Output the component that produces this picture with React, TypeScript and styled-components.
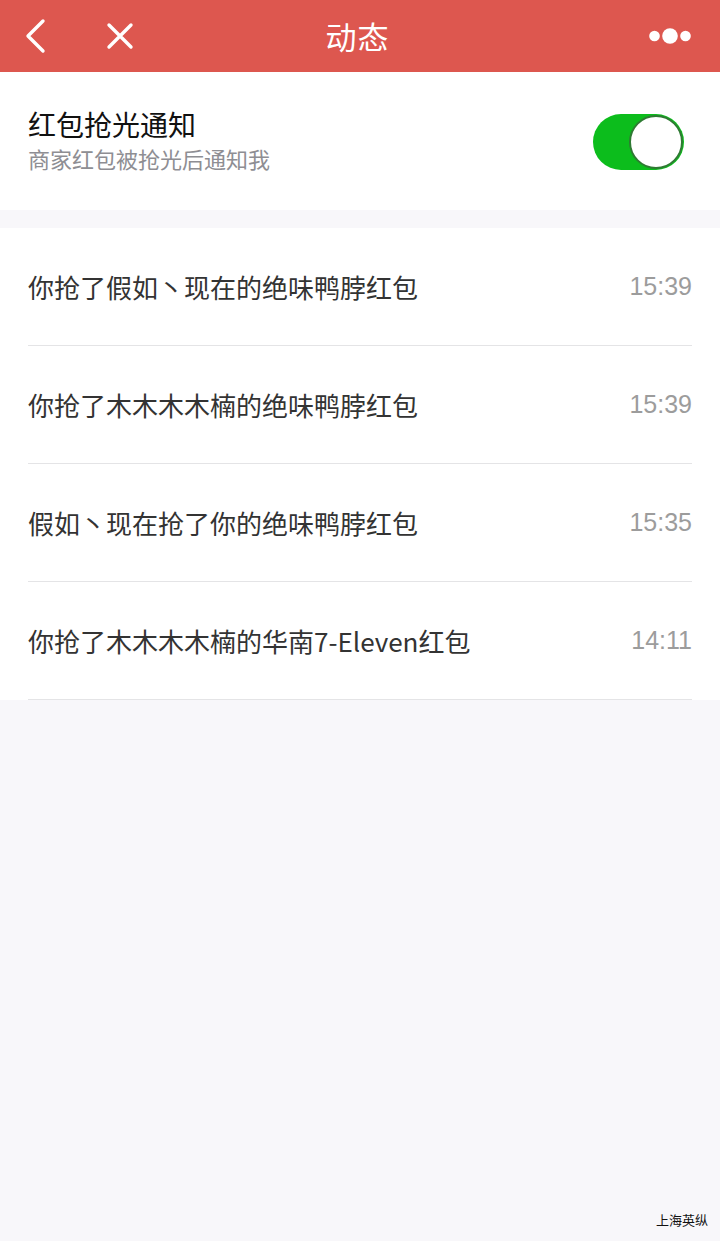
import styled, { createGlobalStyle } from "styled-components";

const GlobalStyle = createGlobalStyle`
  html, body {
    margin: 0;
    padding: 0;
    background: #f8f7fa;
  }
  body {
    font-family: "Noto Sans CJK SC", "Noto Sans", sans-serif;
  }
`;

type Record = { text: string; time: string };

const records: Record[] = [
  { text: "你抢了假如丶现在的绝味鸭脖红包", time: "15:39" },
  { text: "你抢了木木木木楠的绝味鸭脖红包", time: "15:39" },
  { text: "假如丶现在抢了你的绝味鸭脖红包", time: "15:35" },
  { text: "你抢了木木木木楠的华南7-Eleven红包", time: "14:11" },
];

const Page = styled.div`
  width: 720px;
  min-height: 1241px;
  background: #f8f7fa;
  display: flex;
  flex-direction: column;
`;

const NavBar = styled.header`
  height: 72px;
  background: #dd574f;
  display: grid;
  grid-template-columns: 1fr auto 1fr;
  align-items: center;
  padding: 0 29px 0 24px;
  box-sizing: border-box;
`;

const NavLeft = styled.div`
  display: flex;
  align-items: center;
  gap: 60px;
`;

const NavTitle = styled.h1`
  margin: 0 0 2px;
  color: #fff;
  font-size: 31px;
  font-weight: 400;
  letter-spacing: 1px;
`;

const NavRight = styled.div`
  display: flex;
  justify-content: flex-end;
`;

const IconButton = styled.span`
  display: inline-flex;
  align-items: center;
  justify-content: center;
`;

const SwitchSection = styled.section`
  background: #fff;
  height: 138px;
  padding: 0 36px 0 28px;
  display: flex;
  align-items: center;
  justify-content: space-between;
  margin-bottom: 18px;
`;

const SwitchText = styled.div`
  display: flex;
  flex-direction: column;
  gap: 0;
  margin-top: -3px;
`;

const SwitchTitle = styled.div`
  font-size: 28px;
  color: #111;
  line-height: 36px;
`;

const SwitchHint = styled.div`
  font-size: 22px;
  color: #8e8e93;
  line-height: 32px;
`;

const Toggle = styled.div<{ $on: boolean }>`
  width: 91px;
  height: 56px;
  border-radius: 28px;
  background: ${(p) => (p.$on ? "#0cbd1c" : "#e5e5e5")};
  display: flex;
  justify-content: ${(p) => (p.$on ? "flex-end" : "flex-start")};
  margin-top: 2px;
`;

const Knob = styled.div`
  width: 54px;
  height: 54px;
  margin: 1px;
  box-sizing: border-box;
  border-radius: 50%;
  background: #fff;
  border: 2px solid #2f7a33;
`;

const List = styled.ul`
  list-style: none;
  margin: 0;
  padding: 0;
  background: #fff;
`;

const Row = styled.li`
  margin-left: 28px;
  margin-right: 28px;
  height: 118px;
  box-sizing: border-box;
  border-bottom: 1px solid #e4e4e6;
  display: flex;
  align-items: center;
  justify-content: space-between;
`;

const RowText = styled.span`
  font-size: 26px;
  color: #333;
`;

const RowTime = styled.span`
  font-family: "Liberation Sans", "Noto Sans", sans-serif;
  font-size: 25px;
  color: #9c9c9c;
`;

const Spacer = styled.div`
  flex: 1;
`;

const Watermark = styled.div`
  display: flex;
  justify-content: flex-end;
  padding: 0 12px 12px 0;
  font-size: 13px;
  color: #111;
`;

const BackIcon = () => (
  <svg width="22" height="36" viewBox="0 0 22 36">
    <path d="M19 3 L4 18 L19 33" fill="none" stroke="#fff" strokeWidth="3.4" strokeLinecap="round" strokeLinejoin="round" />
  </svg>
);

const CloseIcon = () => (
  <svg width="28" height="28" viewBox="0 0 28 28">
    <path d="M3 3 L25 25 M25 3 L3 25" fill="none" stroke="#fff" strokeWidth="3.4" strokeLinecap="round" />
  </svg>
);

const MoreIcon = () => (
  <svg width="42" height="16" viewBox="0 0 42 16">
    <circle cx="5.5" cy="8" r="5.3" fill="#fff" />
    <circle cx="21" cy="8" r="7.8" fill="#fff" />
    <circle cx="36.5" cy="8" r="5.3" fill="#fff" />
  </svg>
);

export default function App() {
  return (
    <Page>
      <GlobalStyle />
      <NavBar>
        <NavLeft>
          <IconButton><BackIcon /></IconButton>
          <IconButton><CloseIcon /></IconButton>
        </NavLeft>
        <NavTitle>动态</NavTitle>
        <NavRight>
          <IconButton><MoreIcon /></IconButton>
        </NavRight>
      </NavBar>

      <SwitchSection>
        <SwitchText>
          <SwitchTitle>红包抢光通知</SwitchTitle>
          <SwitchHint>商家红包被抢光后通知我</SwitchHint>
        </SwitchText>
        <Toggle $on={true}>
          <Knob />
        </Toggle>
      </SwitchSection>

      <List>
        {records.map((r, i) => (
          <Row key={i}>
            <RowText>{r.text}</RowText>
            <RowTime>{r.time}</RowTime>
          </Row>
        ))}
      </List>

      <Spacer />
      <Watermark>上海英纵</Watermark>
    </Page>
  );
}
